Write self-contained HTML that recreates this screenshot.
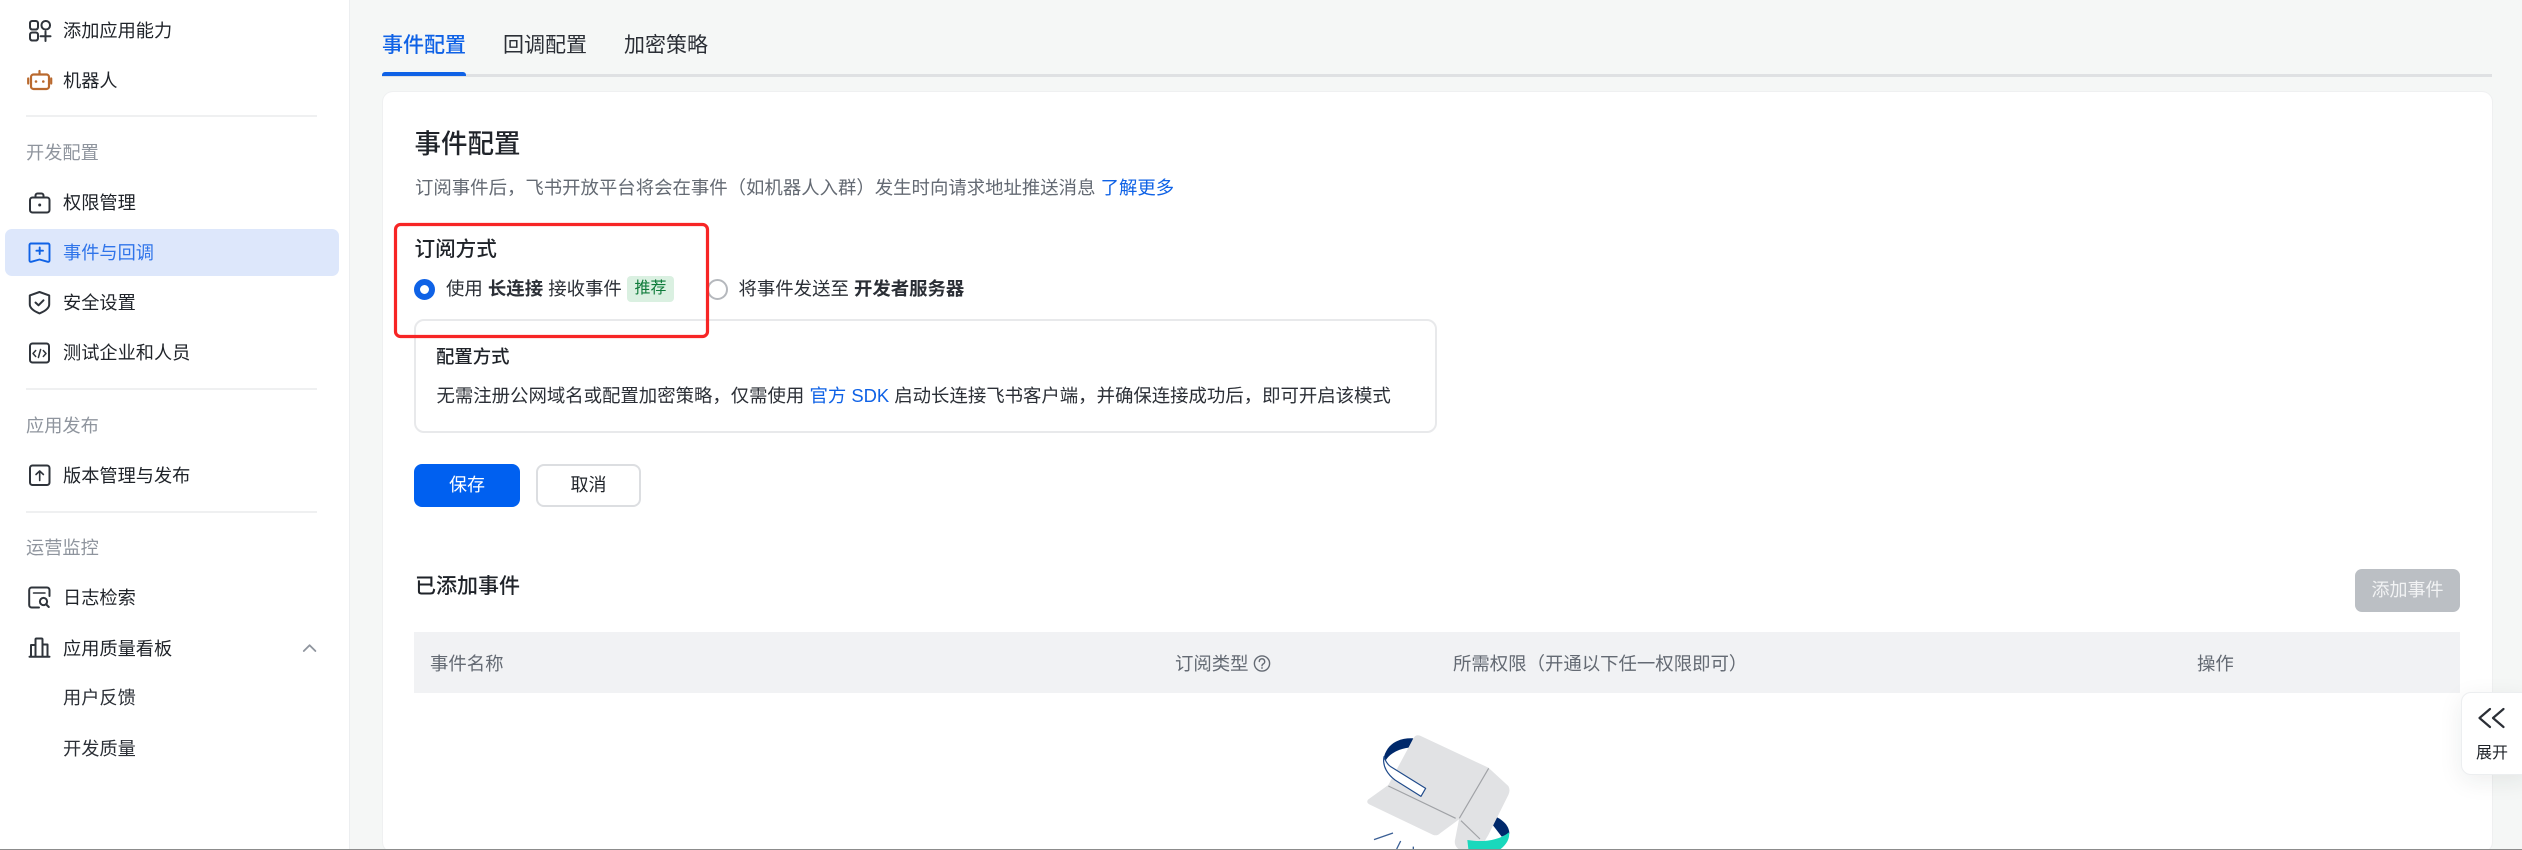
<!DOCTYPE html>
<html lang="zh-CN"><head><meta charset="utf-8"><title>事件配置</title>
<style>
html,body{margin:0;padding:0;width:2522px;height:850px;overflow:hidden;background:#f5f7f6}
body{position:relative;font-family:"Liberation Sans","Noto Sans CJK SC",sans-serif;color:#1f2329;font-size:18.4px}
.a{position:absolute}
.t{position:absolute;line-height:30px;height:30px;white-space:nowrap}
.s{font-size:18.2px}
.lab{color:#8f959e}.sec{color:#646a73}.blue{color:#0f62e6}
.d{position:absolute;left:26px;width:291px;height:2px;background:#eff0f1}
b{font-weight:700}
svg{position:absolute;left:0;top:0}
</style></head><body>
<div class="a" style="left:0;top:0;width:349px;height:850px;background:#fff;border-right:1px solid #eceef0"></div>
<div class="a" style="left:5px;top:229px;width:334px;height:47px;background:#dde7fb;border-radius:7px"></div>
<div class="d" style="top:115px"></div><div class="d" style="top:388px"></div><div class="d" style="top:511px"></div>

<div class="t s" style="left:63px;top:16px">添加应用能力</div>
<div class="t s" style="left:63px;top:66px">机器人</div>
<div class="t s lab" style="left:26px;top:138px">开发配置</div>
<div class="t s" style="left:63px;top:188px">权限管理</div>
<div class="t s" style="left:63px;top:238px;color:#2f74ea">事件与回调</div>
<div class="t s" style="left:63px;top:288px">安全设置</div>
<div class="t s" style="left:63px;top:338px">测试企业和人员</div>
<div class="t s lab" style="left:26px;top:411px">应用发布</div>
<div class="t s" style="left:63px;top:461px">版本管理与发布</div>
<div class="t s lab" style="left:26px;top:533px">运营监控</div>
<div class="t s" style="left:63px;top:583px">日志检索</div>
<div class="t s" style="left:63px;top:634px">应用质量看板</div>
<div class="t s" style="left:63px;top:683px;color:#2b2f36">用户反馈</div>
<div class="t s" style="left:63px;top:734px;color:#2b2f36">开发质量</div>

<!-- tabs -->
<div class="a" style="left:382px;top:74px;width:2110px;height:3px;background:#dfe1e3"></div>
<div class="a" style="left:382px;top:72px;width:84px;height:4px;background:#0f62e6;border-radius:3px 3px 0 0"></div>
<div class="t blue" style="left:382px;top:30.5px;font-size:21px;font-weight:500">事件配置</div>
<div class="t" style="left:503px;top:30.5px;font-size:21px;color:#2b2f36">回调配置</div>
<div class="t" style="left:624px;top:30.5px;font-size:21px;color:#2b2f36">加密策略</div>

<!-- card -->
<div class="a" style="left:383px;top:92px;width:2109px;height:760px;background:#fff;border-radius:10px;box-shadow:0 0 0 1px #eff0f1"></div>
<div class="t" style="left:414.5px;top:128.5px;font-size:26.5px;font-weight:500">事件配置</div>
<div class="t sec" style="left:415px;top:173px">订阅事件后，飞书开放平台将会在事件（如机器人入群）发生时向请求地址推送消息 <span class="blue">了解更多</span></div>

<div class="t" style="left:414.5px;top:234.5px;font-size:20.6px;font-weight:500">订阅方式</div>
<div class="a" style="left:414px;top:278.5px;width:21px;height:21px;box-sizing:border-box;border-radius:50%;border:6.5px solid #0f62e6;background:#fff"></div>
<div class="t" style="left:446px;top:274px;color:#2b2f36">使用 <b>长连接</b> 接收事件</div>
<div class="a" style="left:627px;top:276px;width:47px;height:26px;border-radius:4px;background:#daf0e1;color:#0f7b3a;font-size:16px;line-height:26px;text-align:center">推荐</div>
<div class="a" style="left:707px;top:278.5px;width:21px;height:21px;box-sizing:border-box;border-radius:50%;border:2px solid #b5b8bd;background:#fff"></div>
<div class="t" style="left:738.5px;top:274px;color:#2b2f36">将事件发送至 <b>开发者服务器</b></div>

<div class="a" style="left:414px;top:319px;width:1023px;height:114px;box-sizing:border-box;border:2px solid #e8e9eb;border-radius:10px"></div>
<div class="t" style="left:436px;top:342px;font-weight:500">配置方式</div>
<div class="t" style="left:436.5px;top:381px;color:#2b2f36">无需注册公网域名或配置加密策略，仅需使用 <span class="blue">官方 SDK</span> 启动长连接飞书客户端，并确保连接成功后，即可开启该模式</div>

<div class="a" style="left:414px;top:464px;width:106px;height:43px;background:#0060f0;border-radius:8px;color:#fff;line-height:43px;text-align:center;font-size:18px">保存</div>
<div class="a" style="left:536px;top:464px;width:105px;height:43px;box-sizing:border-box;background:#fff;border:2px solid #dcdee1;border-radius:8px;line-height:39px;text-align:center;font-size:18px">取消</div>

<div class="t" style="left:415px;top:572px;font-size:21px;font-weight:500">已添加事件</div>
<div class="a" style="left:2355px;top:569px;width:105px;height:43px;background:#bbbfc4;border-radius:7px;color:#f2f3f4;line-height:43px;text-align:center;font-size:18px">添加事件</div>

<div class="a" style="left:414px;top:632px;width:2046px;height:61px;background:#f1f2f4"></div>
<div class="t sec" style="left:430px;top:649px">事件名称</div>
<div class="t sec" style="left:1175px;top:649px">订阅类型</div>
<div class="t sec" style="left:1453px;top:649px">所需权限（开通以下任一权限即可）</div>
<div class="t sec" style="left:2197px;top:649px">操作</div>

<svg width="2522" height="850" viewBox="0 0 2522 850" fill="none">
 <!-- red box -->
 <rect x="395.5" y="224.5" width="312" height="112" rx="5" stroke="#f72525" stroke-width="3.2"/>
 <!-- help -->
 <g stroke="#646a73" stroke-width="1.4" stroke-linecap="round"><circle cx="1262" cy="663.5" r="7.6"/><path d="M1259.3 661.5a2.7 2.7 0 1 1 4 2.4c-.9.5-1.3 1-1.3 1.9"/></g><circle cx="1262" cy="668" r=".9" fill="#646a73"/>
 <g stroke="#2f343b" stroke-width="2" stroke-linecap="round" stroke-linejoin="round">
  <!-- add app -->
  <rect x="30" y="21" width="8" height="8.5" rx="2.200"/><rect x="41.5" y="21" width="8.5" height="8.5" rx="4"/><rect x="30" y="32.5" width="8" height="8" rx="2.200"/><path d="M40.5 36.200h10M45.500 31.500v9.500"/>
  <!-- lock -->
  <rect x="30" y="197.5" width="19.5" height="15" rx="2.5"/><path d="M35.500 197v-1.500a2 2 0 0 1 2-2h4a2 2 0 0 1 2 2v1.500"/>
  <!-- shield -->
  <path d="M39.500 292l9.700 3.400v9c0 3.500-3.500 6.500-9.700 9-6.200-2.500-9.700-5.500-9.700-9v-9z"/><path d="M35.500 302.500l3 2.800 5-5"/>
  <!-- code -->
  <rect x="30" y="343.5" width="19" height="19" rx="2.5"/><path d="M35.700 350.500l-2.700 3 2.700 3M43.300 350.500l2.700 3-2.700 3M40.600 349.500l-2.200 8" stroke-width="1.5"/>
  <!-- upload -->
  <rect x="30" y="465.5" width="19.5" height="19.5" rx="2.5"/><path d="M39.700 480.500v-9M36 474.500l3.700-3.500 3.700 3.500" stroke-width="1.6"/>
  <!-- log -->
  <path d="M49.500 596v-6a2.500 2.500 0 0 0-2.500-2.500H31.700a2.500 2.500 0 0 0-2.500 2.500v15a2.500 2.500 0 0 0 2.500 2.500H39"/><path d="M33.500 593h11.500" stroke-width="1.5"/><circle cx="43.500" cy="601.500" r="3.6"/><path d="M46.300 604.500l2.500 2.500"/>
  <!-- bars -->
  <path d="M29.500 656.800h20M31 656.500v-11.500h4.500v11.500M35.500 656.500v-17a1 1 0 0 1 1-1h5a1 1 0 0 1 1 1v17M42.500 644.500h5v12"/>
 </g>
 <circle cx="39.700" cy="205" r="1.5" fill="#2f343b"/>
 <!-- robot -->
 <g stroke="#b9692e" stroke-width="2.2" stroke-linecap="round">
  <rect x="31" y="74.5" width="18" height="14.5" rx="2.5"/><path d="M39.500 71v3M28.200 78.500v5M51.200 78.500v5"/>
 </g><circle cx="36" cy="81.500" r="1.3" fill="#b9692e"/><circle cx="43.300" cy="81.500" r="1.3" fill="#b9692e"/>
 <!-- event icon -->
 <g stroke="#0f62e6" stroke-width="1.9" stroke-linecap="round" stroke-linejoin="round">
  <path d="M31.500 243.500h16.500a1.500 1.500 0 0 1 1.500 1.500v15.500c0 1-.8 1.500-1.700 1.300l-8.300-2.300-8.300 2.300c-.9.200-1.700-.3-1.700-1.300V245a1.500 1.500 0 0 1 1.500-1.500z"/><path d="M39.700 247.500v6.500M36.400 250.700h6.600"/>
 </g>
 <!-- chevron -->
 <path d="M303.800 651l5.800-5.800 5.800 5.800" stroke="#8f959e" stroke-width="1.8" stroke-linecap="round" stroke-linejoin="round"/>

 <!-- illustration -->
 <g transform="translate(1360 725) scale(.33333)">
  <path d="M160 40C125 38 85 50 72 95L76 108C88 86 115 72 146 68Z" fill="#00296b"/>
  <path d="M405 274C430 285 448 303 448 326L425 335 395 296Z" fill="#00296b"/>
  <path d="M160 41Q166 27 180 32L385 128 445 183Q452 195 445 210L385 330 360 372H295Q280 360 286 340L297 283 240 325Q232 333 220 330L28 238Q18 232 24 224L85 180Z" fill="#e1e2e4"/>
  <path d="M85 183L287 280M386 130L298 280M303 287L360 342" stroke="#a0a2a6" stroke-width="3.5"/>
  <path d="M72 95C66 125 85 150 105 165L183 214 197 190 92 125C82 118 76 108 72 95Z" fill="#fff" stroke="#1f4a8a" stroke-width="3.5" stroke-linejoin="round"/>
  <path d="M322 345C365 352 415 348 447 322 450 340 440 358 422 372H325Z" fill="#19d8bc"/>
  <path d="M42 344L99 324M110 372L122 348M160 372V365" stroke="#3a5f95" stroke-width="4"/>
 </g>
</svg>

<!-- expand -->
<div class="a" style="left:2461px;top:692px;width:70px;height:83px;box-sizing:border-box;background:#fff;border:1px solid #eceef0;border-radius:10px;box-shadow:0 6px 24px rgba(31,35,41,.08)"></div>
<svg width="2522" height="850" viewBox="0 0 2522 850" fill="none"><path d="M2490 709l-10.500 9 10.500 9M2503.500 709l-10.500 9 10.500 9" stroke="#2b2f36" stroke-width="2.2" stroke-linecap="round" stroke-linejoin="round"/></svg>
<div class="t" style="left:2476px;top:739px;font-size:16px;width:32px;text-align:center">展开</div>

<div class="a" style="left:0;top:849px;width:2522px;height:1px;background:#8c8c8c"></div>
</body></html>
